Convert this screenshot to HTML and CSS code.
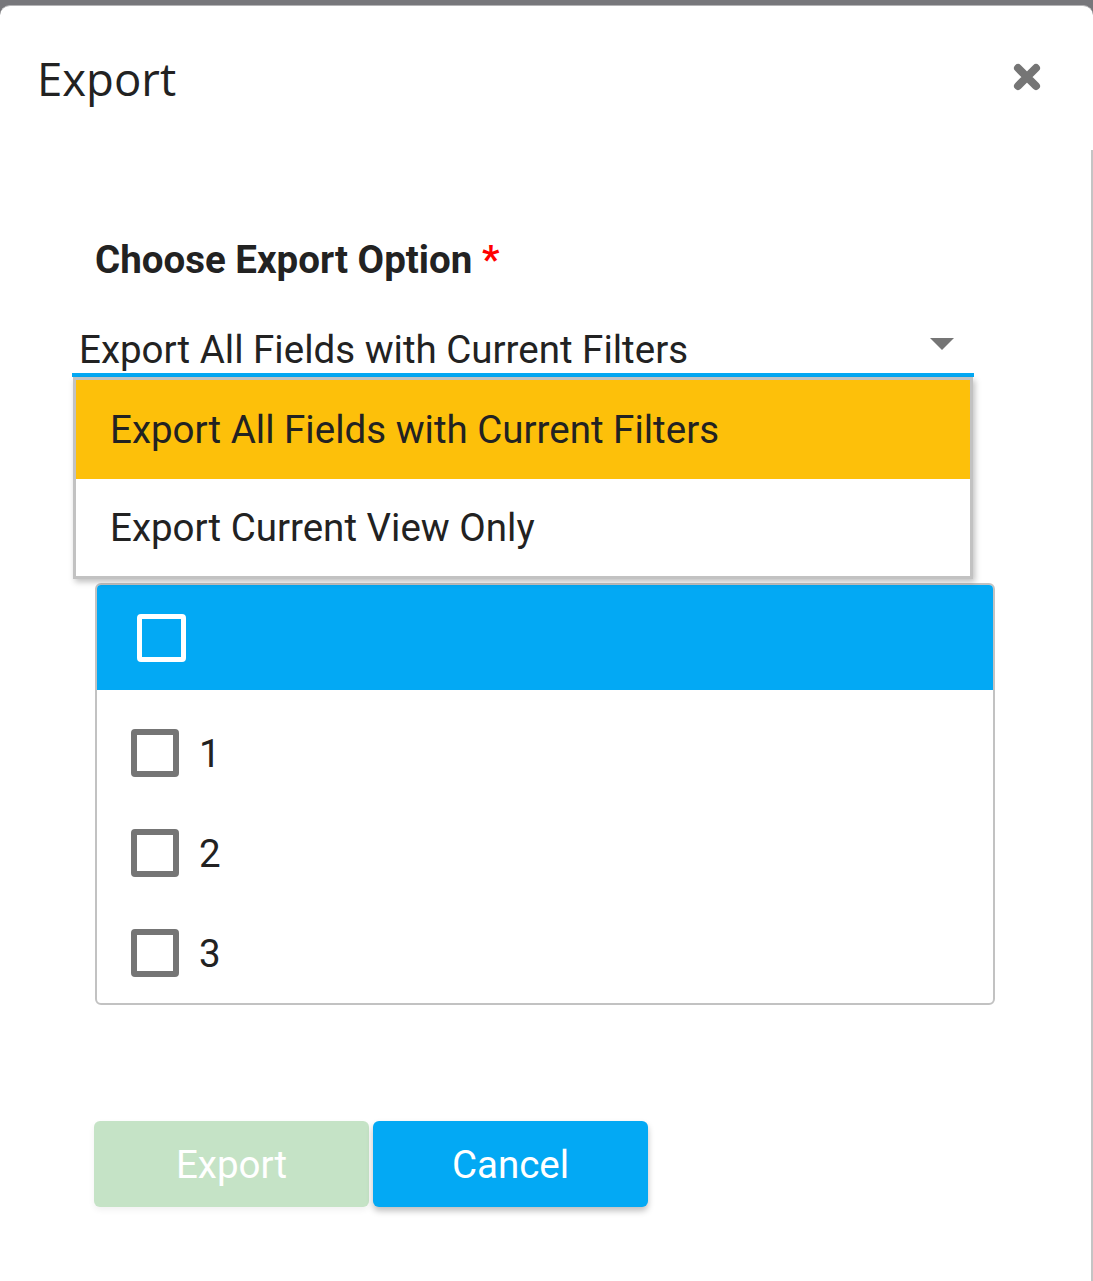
FILE: index.html
```html
<!DOCTYPE html>
<html lang="en">
<head>
    <meta charset="UTF-8">
    <meta name="viewport" content="width=device-width, initial-scale=1.0">
    <title>Export</title>
    <link rel="stylesheet" href="styles.css">
</head>
<body>
    <div class="modal">
        <div class="modal-header">
            <h2>Export</h2>
            <button class="close-btn" type="button" aria-label="Close">
                <svg width="28" height="28" viewBox="0 0 28 28">
                    <path d="M5 5 L23 23 M23 5 L5 23" stroke="#757575" stroke-width="8" stroke-linecap="round"/>
                </svg>
            </button>
        </div>

        <div class="modal-body">
            <label class="field-label">Choose Export Option <span class="required">*</span></label>

            <div class="select">
                <div class="select-value">Export All Fields with Current Filters</div>
                <span class="caret"></span>

                <!-- open menu lies over the list below -->
                <ul class="select-menu">
                    <li class="option selected">Export All Fields with Current Filters</li>
                    <li class="option">Export Current View Only</li>
                </ul>
            </div>

            <div class="check-list">
                <div class="check-head">
                    <span class="checkbox light"></span>
                </div>
                <div class="check-row"><span class="checkbox"></span><span>1</span></div>
                <div class="check-row"><span class="checkbox"></span><span>2</span></div>
                <div class="check-row"><span class="checkbox"></span><span>3</span></div>
            </div>

            <div class="actions">
                <button class="btn btn-export" type="button" disabled>Export</button>
                <button class="btn btn-cancel" type="button">Cancel</button>
            </div>
        </div>
    </div>
</body>
</html>
```

FILE: styles.css
```css
html, body {
    margin: 0;
    padding: 0;
}

body {
    font-family: Roboto, 'Liberation Sans', sans-serif;
    background: #77777b;
    color: #212121;
    height: 1281px;
    overflow: hidden;
}

.modal {
    margin-top: 5px;
    border-top: 1px solid #b4b4b6;
    background: white;
    border-radius: 10px 10px 0 0;
    height: 1275px;
}

.modal-header {
    height: 144px;
    display: flex;
    justify-content: space-between;
    align-items: flex-start;
    padding: 0 52px 0 37px;
}

.modal-header h2 {
    margin: 0;
    padding-top: 42px;
    font-family: 'Open Sans', Roboto, sans-serif;
    font-size: 45.5px;
    font-weight: 400;
    line-height: 60px;
    color: #222;
}

.close-btn {
    background: none;
    border: none;
    padding: 0;
    margin-top: 57px;
    cursor: pointer;
    display: flex;
}

.modal-body {
    border-right: 2px solid #c4c4c4;
    height: 1131px;
    padding-top: 88px;
    box-sizing: border-box;
}

.field-label {
    display: block;
    margin-left: 95px;
    font-size: 38.5px;
    font-weight: 700;
    line-height: 44px;
    color: #222;
}

.required {
    color: #f00;
}

.select {
    position: relative;
    margin: 48px 0 0 72px;
    width: 902px;
    height: 47px;
    padding: 0 7px;
    box-sizing: border-box;
    border-bottom: 4px solid #03a9f4;
    display: flex;
    align-items: center;
    justify-content: space-between;
}

.select-value {
    font-size: 38.5px;
    line-height: 44px;
    color: #222;
    margin-top: -4px;
}

.caret {
    width: 0;
    height: 0;
    border-left: 12px solid transparent;
    border-right: 12px solid transparent;
    border-top: 12px solid #757575;
    margin: -16px 13px 0 0;
}

.select-menu {
    position: absolute;
    top: calc(100% + 4px);
    left: 1px;
    width: 900px;
    box-sizing: border-box;
    margin: 0;
    padding: 0;
    list-style: none;
    background: white;
    border: 3px solid #c2c2c2;
    box-shadow: 2px 3px 6px rgba(0, 0, 0, 0.25);
    z-index: 10;
}

.option {
    height: 97px;
    display: flex;
    align-items: center;
    padding-left: 34px;
    font-size: 38.5px;
    color: #222;
}

.option.selected {
    background: #fdc00a;
    height: 99px;
}

.check-list {
    margin: 206px 0 0 95px;
    width: 900px;
    height: 422px;
    box-sizing: border-box;
    border: 2px solid #c2c2c2;
    border-radius: 6px;
    overflow: hidden;
}

.check-head {
    background: #03a9f4;
    height: 105px;
    display: flex;
    align-items: center;
    padding-left: 40px;
}

.check-row {
    height: 100px;
    display: flex;
    align-items: center;
    gap: 20px;
    padding-left: 34px;
    font-size: 38.5px;
    color: #222;
}

.check-head + .check-row {
    margin-top: 13px;
}

.checkbox {
    width: 48px;
    height: 48px;
    box-sizing: border-box;
    border: 6px solid #757575;
    border-radius: 4px;
    display: inline-block;
}

.checkbox.light {
    width: 49px;
    border: 5px solid white;
}

.actions {
    margin: 116px 0 0 94px;
    display: flex;
    gap: 4px;
}

.btn {
    width: 275px;
    height: 86px;
    border: none;
    border-radius: 6px;
    font-family: Roboto, 'Liberation Sans', sans-serif;
    font-size: 38.5px;
    color: white;
    cursor: pointer;
}

.btn-export {
    background: #c5e3c6;
    box-shadow: 0 3px 6px rgba(0, 0, 0, 0.06);
    cursor: default;
}

.btn-cancel {
    background: #03a9f4;
    box-shadow: 0 4px 6px rgba(0, 0, 0, 0.25);
}
```
